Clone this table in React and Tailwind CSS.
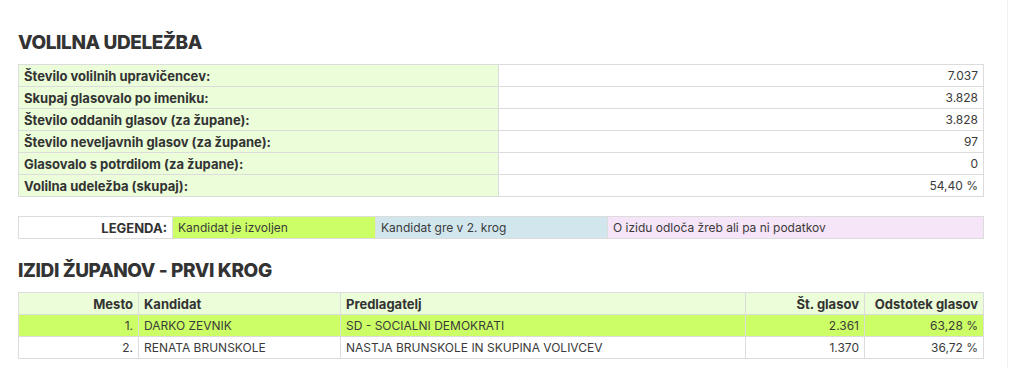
import React from 'react';

const stats = [
  ['Število volilnih upravičencev:', '7.037'],
  ['Skupaj glasovalo po imeniku:', '3.828'],
  ['Število oddanih glasov (za župane):', '3.828'],
  ['Število neveljavnih glasov (za župane):', '97'],
  ['Glasovalo s potrdilom (za župane):', '0'],
  ['Volilna udeležba (skupaj):', '54,40 %'],
];

const candidates = [
  { place: '1.', name: 'DARKO ZEVNIK', party: 'SD - SOCIALNI DEMOKRATI', votes: '2.361', pct: '63,28 %', elected: true },
  { place: '2.', name: 'RENATA BRUNSKOLE', party: 'NASTJA BRUNSKOLE IN SKUPINA VOLIVCEV', votes: '1.370', pct: '36,72 %' },
];

const cell = 'border border-[#dcdcdc] px-[5px] h-[22px] py-0 leading-[20px]';
const bold = 'font-bold text-[13px]';
const plain = 'text-[12px] text-[#3a3a3a]';

export default function App() {
  return (
    <div className="flex bg-white text-[#333]" style={{ fontFamily: 'Inter, "Noto Sans", sans-serif' }}>
      <div className="w-[1008px] h-[368px] border-r border-[#f0f0f0] pl-[18px] pr-[23px] pt-[31px]">
        <h2 className="text-[19px] font-extrabold tracking-[-0.4px] leading-[24px] mb-[9px]">VOLILNA UDELEŽBA</h2>
        <table className="w-full border-collapse">
          <tbody>
            {stats.map(([label, value]) => (
              <tr key={label}>
                <td className={`${cell} ${bold} w-[480px] bg-[#ebfdd9]`}>{label}</td>
                <td className={`${cell} ${plain} text-right`}>{value}</td>
              </tr>
            ))}
          </tbody>
        </table>

        <table className="w-full border-collapse mt-[19px]">
          <tbody>
            <tr>
              <td className={`${cell} ${bold} w-[154px] text-right`}>LEGENDA:</td>
              <td className={`${cell} ${plain} w-[203px] bg-[#ccff66]`}>Kandidat je izvoljen</td>
              <td className={`${cell} ${plain} w-[232px] bg-[#d2e6ee]`}>Kandidat gre v 2. krog</td>
              <td className={`${cell} ${plain} bg-[#f6e4f8]`}>O izidu odloča žreb ali pa ni podatkov</td>
            </tr>
          </tbody>
        </table>

        <h2 className="text-[19px] font-extrabold tracking-[-0.4px] leading-[24px] mt-[20px] mb-[9px]">IZIDI ŽUPANOV - PRVI KROG</h2>
        <table className="w-full border-collapse">
          <thead>
            <tr className="bg-[#ebfdd9]">
              <td className={`${cell} ${bold} w-[120px] text-right`}>Mesto</td>
              <td className={`${cell} ${bold} w-[202px]`}>Kandidat</td>
              <td className={`${cell} ${bold} w-[405px]`}>Predlagatelj</td>
              <td className={`${cell} ${bold} w-[119px] text-right`}>Št. glasov</td>
              <td className={`${cell} ${bold} text-right`}>Odstotek glasov</td>
            </tr>
          </thead>
          <tbody>
            {candidates.map((c) => (
              <tr key={c.place} className={c.elected ? 'bg-[#ccff66]' : ''}>
                <td className={`${cell} ${plain} text-right`}>{c.place}</td>
                <td className={`${cell} ${plain}`}>{c.name}</td>
                <td className={`${cell} ${plain}`}>{c.party}</td>
                <td className={`${cell} ${plain} text-right`}>{c.votes}</td>
                <td className={`${cell} ${plain} text-right`}>{c.pct}</td>
              </tr>
            ))}
          </tbody>
        </table>
      </div>
    </div>
  );
}
